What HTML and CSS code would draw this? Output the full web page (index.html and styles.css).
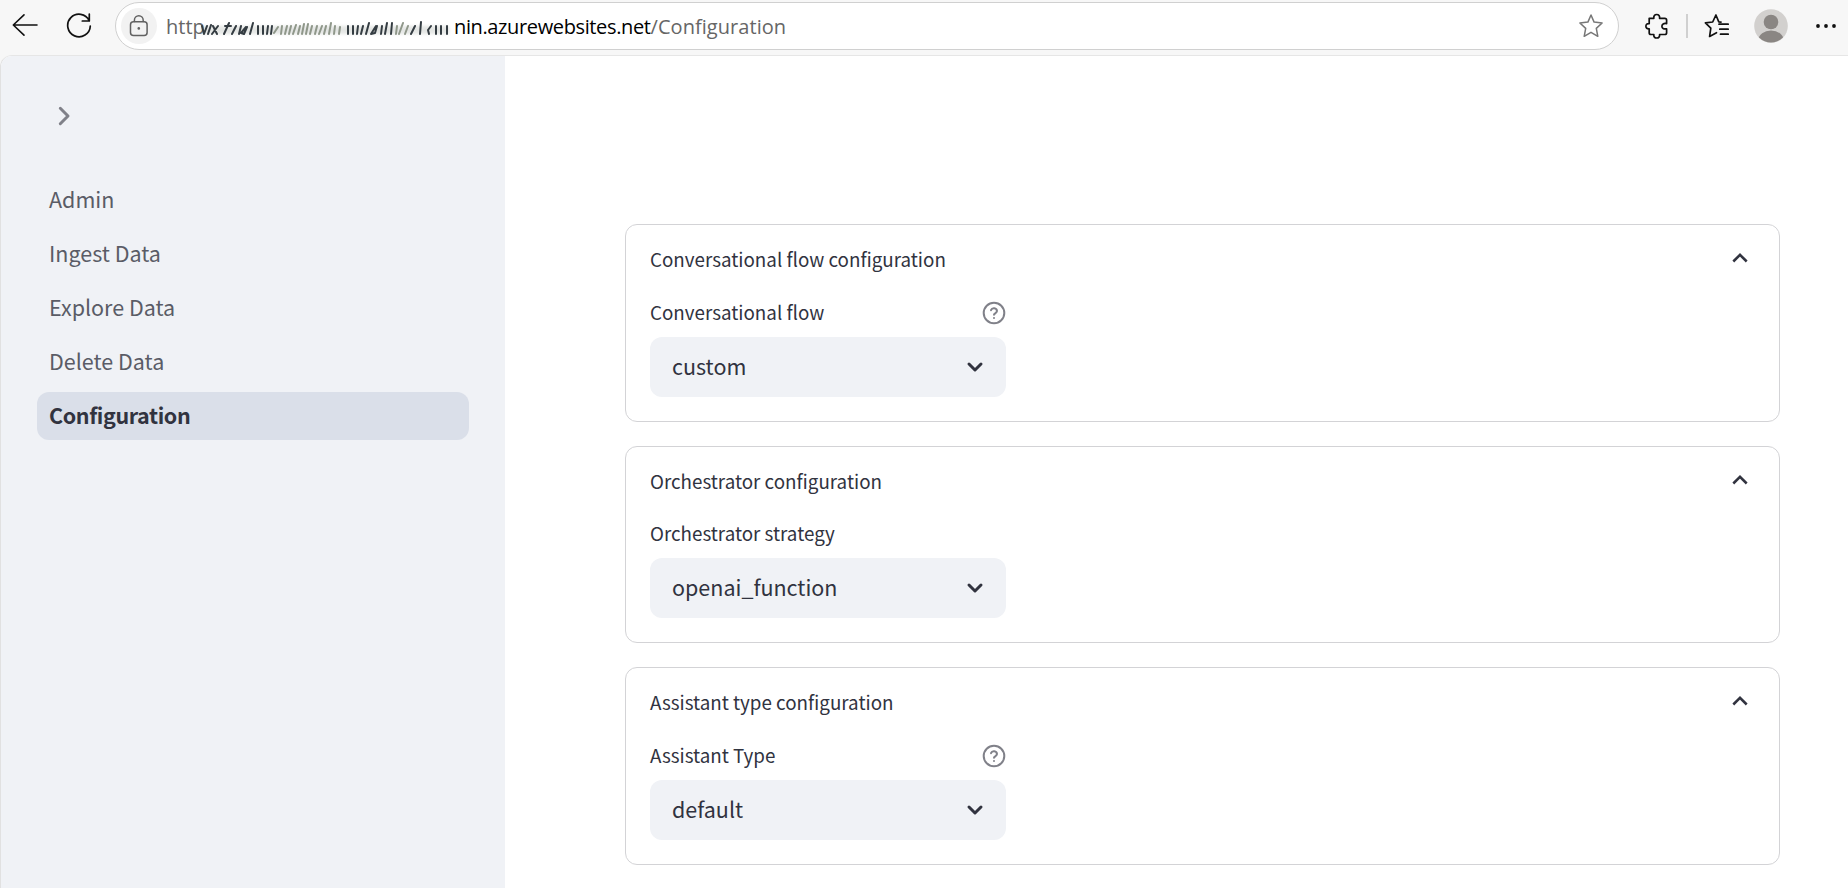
FILE: index.html
```html
<!DOCTYPE html>
<html lang="en">
<head>
<meta charset="utf-8">
<title>Configuration</title>
<link rel="stylesheet" href="styles.css">
</head>
<body>
<header class="toolbar">
  <svg class="back" width="26" height="24" viewBox="0 0 26 24"><path d="M25 12H1.5M12 1.8L1.3 12 12 22.2"/></svg>
  <svg class="reload" width="26" height="26" viewBox="0 0 26 26"><path d="M23.2 7.6A11.3 11.3 0 1 0 24.3 13M23.3 1v7h-7"/></svg>
  <div class="address">
    <span class="lock"><svg width="20" height="22" viewBox="0 0 20 22"><rect x="1.5" y="6.8" width="16.6" height="13.6" rx="3"/><path d="M5.4 6.5V5.2a4.4 4.4 0 0 1 8.8 0v1.3"/><circle cx="9.8" cy="13.4" r="1.3"/></svg></span>
    <span class="scheme">http</span>
    <svg class="smudge" width="264" height="48" viewBox="0 0 264 48">
      <path class="smear" d="M8 28h248"/>
      <g class="ink">
        <path d="M9 24l2 8M14 24l-3 8M18 23l-3 9M20 24l4 8M25 24l-6 8M36 21l-5 11M32 24h6M43 24l-4 8M48 24l-2 8M53 25l-5 6 3 1 3-7M60 21l-3 11M65 24v8M70 24v8M75 24l-1 8M79 24l-1 8"/>
        <path class="green" d="M85 25l-4 6M89 24l-1 8M94 24l-2 8M98 24l-2 8M103 23l-3 9M107 24l-2 8M111 22l-2 10M115 22l-2 10M119 24l-2 8M124 24l-2 8M129 24l-3 8M133 24l-2 8M138 21l-2 11M142 24l-1 8M147 25l-1 7"/>
        <path d="M155 24v8M160 24v8M165 24l-1 8M170 24l-2 8M176 21l-3 11M183 24l-5 8 4-1 2-7M189 24l-1 8M194 21l-2 11M199 21l-1 11"/>
        <path class="green" d="M204 24l-1 8M210 21l-4 11M215 24l-3 8"/>
        <path d="M222 24l-4 8M228 20l-1 12M238 24l-3 4 1 4M243 24v8M248 24v8M254 24v8"/>
      </g>
    </svg>
    <span class="host">nin.azurewebsites.net</span><span class="path">/Configuration</span>
    <svg class="star" width="26" height="26" viewBox="0 0 26 26"><path d="M13 2l3.1 7.1 8 .9-5.8 5.4 1.5 7.900-6.800-4-6.800 4 1.500-7.900L1.900 10l8-.9z"/></svg>
  </div>
  <svg class="tool puzzle" width="24" height="26" viewBox="0 0 24 26"><path d="M4.200 5.300h4.600c-.3-2.200.9-3.800 2.900-3.800s3.200 1.600 2.900 3.800h5.200q1.800 0 1.800 1.800v3.500c-2.900-.6-4.700.6-4.700 2.600s1.800 3.200 4.700 2.600v3.900q0 1.800-1.800 1.800h-5.200c.3 2.200-.9 3.500-2.900 3.500s-3.200-1.300-2.900-3.500H6q-1.800 0-1.800-1.800v-3.900c-2.100.2-3.300-.8-3.300-2.600s1.200-2.800 3.300-2.600z"/></svg>
  <span class="divider"></span>
  <svg class="tool favorites" width="26" height="26" viewBox="0 0 26 26"><path d="M17 9.100l-2.200-.3L11.900 2 8.700 9l-7.300.9 5.400 5.300-1.200 8.300 6.900-3.800M15 11.200h9.200M15.800 16.200h8.400M16.500 21.200h7.700"/></svg>
  <svg class="avatar" width="34" height="34" viewBox="0 0 34 34"><defs><clipPath id="face"><circle cx="17" cy="17" r="16.500"/></clipPath></defs><circle cx="17" cy="17" r="16.800" fill="#d2d0ce"/><g clip-path="url(#face)" fill="#8a8683"><circle cx="17" cy="13" r="7.300"/><ellipse cx="17" cy="31" rx="12.500" ry="9.500"/></g></svg>
  <svg class="more" width="22" height="6" viewBox="0 0 22 6"><circle cx="3" cy="3" r="1.900"/><circle cx="11" cy="3" r="1.900"/><circle cx="19" cy="3" r="1.900"/></svg>
</header>
<div class="page">
  <aside class="sidebar">
    <svg class="expand" width="14" height="20" viewBox="0 0 14 20"><path d="M2.300 2.300L10 10l-7.700 7.700"/></svg>
    <nav class="nav">
      <a class="link">Admin</a>
      <a class="link">Ingest Data</a>
      <a class="link">Explore Data</a>
      <a class="link">Delete Data</a>
      <a class="link active">Configuration</a>
    </nav>
  </aside>
  <main class="content">
    <section class="card">
      <div class="summary"><span>Conversational flow configuration</span><svg class="caret" width="18" height="12" viewBox="0 0 18 12"><path d="M2.300 9.500L9 2.800l6.700 6.700"/></svg></div>
      <div class="field">
        <div class="label"><span>Conversational flow</span><svg class="help" width="24" height="24" viewBox="0 0 24 24"><circle cx="12" cy="12" r="10.300"/><path d="M9 9.200a3.100 3.100 0 0 1 6 .9c0 2-3 2.300-3 3.600M12 17v.1"/></svg></div>
        <div class="select"><span>custom</span><svg class="arrow" width="18" height="12" viewBox="0 0 18 12"><path d="M3 3l6 6 6-6"/></svg></div>
      </div>
    </section>
    <section class="card short">
      <div class="summary"><span>Orchestrator configuration</span><svg class="caret" width="18" height="12" viewBox="0 0 18 12"><path d="M2.300 9.500L9 2.800l6.700 6.700"/></svg></div>
      <div class="field">
        <div class="label"><span>Orchestrator strategy</span></div>
        <div class="select"><span>openai_function</span><svg class="arrow" width="18" height="12" viewBox="0 0 18 12"><path d="M3 3l6 6 6-6"/></svg></div>
      </div>
    </section>
    <section class="card">
      <div class="summary"><span>Assistant type configuration</span><svg class="caret" width="18" height="12" viewBox="0 0 18 12"><path d="M2.300 9.500L9 2.800l6.700 6.700"/></svg></div>
      <div class="field">
        <div class="label"><span>Assistant Type</span><svg class="help" width="24" height="24" viewBox="0 0 24 24"><circle cx="12" cy="12" r="10.300"/><path d="M9 9.200a3.100 3.100 0 0 1 6 .9c0 2-3 2.300-3 3.600M12 17v.1"/></svg></div>
        <div class="select"><span>default</span><svg class="arrow" width="18" height="12" viewBox="0 0 18 12"><path d="M3 3l6 6 6-6"/></svg></div>
      </div>
    </section>
  </main>
</div>
</body>
</html>
```

FILE: styles.css
```css
* { box-sizing: border-box; }
body {
  margin: 0;
  width: 1848px;
  height: 888px;
  overflow: hidden;
  background: #f7f7f7;
  color: #31333f;
  font-family: "Noto Sans CJK SC", "Noto Sans", sans-serif;
}
svg { display: block; flex: none; fill: none; stroke-linecap: round; stroke-linejoin: round; }

.toolbar { display: flex; align-items: center; height: 55px; padding: 0 11px 3px 12px; }
.back { stroke: #111; stroke-width: 1.6; margin: 0 28px 2px 0; }
.reload { stroke: #111; stroke-width: 1.7; margin-right: 23px; }
.address {
  display: flex;
  align-items: center;
  width: 1504px;
  height: 48px;
  padding: 0 14px 0 5px;
  border: 1.5px solid #d0d0d0;
  border-radius: 24px;
  background: #fff;
  font-family: "Open Sans", "Noto Sans", sans-serif;
  font-size: 20px;
  line-height: 28px;
  white-space: nowrap;
}
.lock {
  display: grid;
  place-items: center;
  width: 36px;
  height: 36px;
  margin-right: 9px;
  border-radius: 50%;
  background: #f2f2f2;
}
.lock svg { stroke: #616161; stroke-width: 1.5; }
.lock circle { fill: #616161; stroke: none; }
.scheme { width: 27px; padding-top: 1px; color: #666; }
.smudge { margin-right: -3px; }
.smear { stroke: #b4bab4; stroke-width: 8; opacity: .35; filter: blur(1.5px); stroke-linecap: butt; }
.ink { stroke: #343c42; stroke-width: 2; filter: blur(.6px); }
.green { stroke: #8f978a; }
.host { padding-top: 1px; color: #000; letter-spacing: -.37px; }
.path { padding-top: 1px; color: #666; letter-spacing: .05px; }
.star { margin-left: auto; stroke: #777; stroke-width: 1.5; }
.tool { stroke: #111; stroke-width: 1.7; }
.puzzle { margin-left: 26px; }
.divider { width: 2px; height: 24px; margin: 0 16px 0 17px; background: #d0d0d0; }
.avatar { margin-left: 24px; }
.more { margin-left: auto; fill: #111; }

.page {
  display: flex;
  height: 833px;
  border-top: 1px solid #e6e6e6;
  border-left: 1px solid #e1e1e1;
  border-top-left-radius: 12px;
  background: #fff;
  overflow: hidden;
}
.sidebar { width: 504px; padding: 50px 36px 0; background: #f0f2f6; }
.expand { margin-left: 21px; stroke: #808189; stroke-width: 3; }
.nav { display: flex; flex-direction: column; gap: 6px; margin-top: 50px; }
.link {
  height: 48px;
  padding-left: 12px;
  border-radius: 12px;
  font-size: 21.5px;
  line-height: 45px;
  color: #5a5c66;
}
.active { background: #dadfe9; color: #31333f; font-weight: 700; letter-spacing: -.38px; }

.content { display: flex; flex-direction: column; gap: 24px; width: 1155px; margin: 168px 0 0 120px; }
.card { height: 198px; padding: 0 24px; border: 1px solid #d3d3d6; border-radius: 12px; }
.card.short { height: 197px; }
.summary {
  display: flex;
  align-items: center;
  justify-content: space-between;
  height: 70px;
  padding-right: 6px;
  font-size: 18.8px;
}
.summary span, .label span { padding-bottom: 4px; }
.caret { stroke: #31333f; stroke-width: 2.5; margin-bottom: 4px; stroke-linecap: butt; stroke-linejoin: miter; }
.field { width: 356px; }
.label {
  display: flex;
  align-items: center;
  justify-content: space-between;
  height: 36px;
  margin-bottom: 6px;
  font-size: 18.8px;
}
.short .label { height: 35px; }
.help { stroke: #808189; stroke-width: 2; }
.select {
  display: flex;
  align-items: center;
  justify-content: space-between;
  height: 60px;
  padding: 0 22px;
  border-radius: 12px;
  background: #f0f2f6;
  font-size: 21.5px;
  line-height: 32px;
}
.select span { padding-bottom: 3px; }
.arrow { stroke: #31333f; stroke-width: 3; }
```
